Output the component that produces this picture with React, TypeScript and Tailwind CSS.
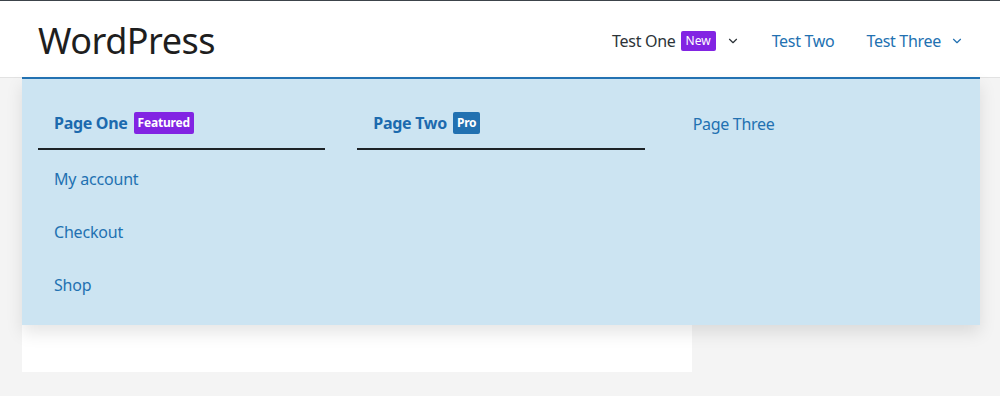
import React from 'react';
import { ChevronDown } from 'lucide-react';

const columns = [
  {
    title: 'Page One',
    badge: { label: 'Featured', color: 'bg-[#8224e3]' },
    links: ['My account', 'Checkout', 'Shop'],
    heading: true,
  },
  {
    title: 'Page Two',
    badge: { label: 'Pro', color: 'bg-[#2271b1]' },
    links: [],
    heading: true,
  },
  {
    title: 'Page Three',
    badge: null,
    links: [],
    heading: false,
  },
];

const App: React.FC = () => {
  return (
    <div
      className="relative min-h-[396px] bg-[#f4f4f4]"
      style={{ fontFamily: '"Noto Sans", "Liberation Sans", sans-serif' }}
    >
      {/* Site header */}
      <header className="h-[78px] bg-white border-t border-[#3c434a] border-b border-b-[#e2e2e2] flex items-center justify-between pl-[38px] pr-[36px] pt-[4px]">
        <div className="text-[36px] leading-none text-[#1e1e1e] tracking-[-0.5px]">WordPress</div>
        <nav className="flex items-center gap-[32px] text-[16px] tracking-[-0.3px]">
          <div className="flex items-center">
            <span className="text-[#2c3338]">Test One</span>
            <span className="ml-[5px] bg-[#8224e3] text-white text-[12px] leading-[20px] px-[5px] rounded-[2px] tracking-normal">New</span>
            <ChevronDown size={14} strokeWidth={2} className="ml-[10px] text-[#2c3338]" />
          </div>
          <span className="text-[#2271b1]">Test Two</span>
          <div className="flex items-center text-[#2271b1]">
            <span>Test Three</span>
            <ChevronDown size={14} strokeWidth={2} className="ml-[9px]" />
          </div>
        </nav>
      </header>

      {/* Page content */}
      <main className="px-[22px]">
        <div className="w-[670px] h-[294px] bg-white" />
      </main>

      {/* Mega menu dropdown */}
      <div className="absolute left-[22px] top-[77px] w-[958px] bg-[#cce4f2] border-t-2 border-[#2271b1] shadow-[0_8px_16px_rgba(0,0,0,0.1)] px-[16px] pt-[18px] pb-[14px]">
        <div className="grid grid-cols-3 gap-[32px]">
          {columns.map((col) => (
            <div key={col.title}>
              <div
                className={`flex items-center h-[53px] px-[16px] ${
                  col.heading ? 'border-b-2 border-[#1d2327] font-bold text-[#1c6aae]' : 'text-[#2271b1]'
                }`}
              >
                <span className="text-[16px] tracking-[-0.3px]">{col.title}</span>
                {col.badge && (
                  <span className={`ml-[6px] ${col.badge.color} text-white text-[12px] font-bold leading-[22px] px-[4px] rounded-[2px] tracking-[-0.2px]`}>
                    {col.badge.label}
                  </span>
                )}
              </div>
              {col.links.map((link, i) => (
                <div
                  key={link}
                  className={`h-[53px] flex items-center px-[16px] text-[16px] tracking-[-0.2px] text-[#2271b1] ${i === 0 ? 'mt-[2px]' : ''}`}
                >
                  {link}
                </div>
              ))}
            </div>
          ))}
        </div>
      </div>
    </div>
  );
};

export default App;
